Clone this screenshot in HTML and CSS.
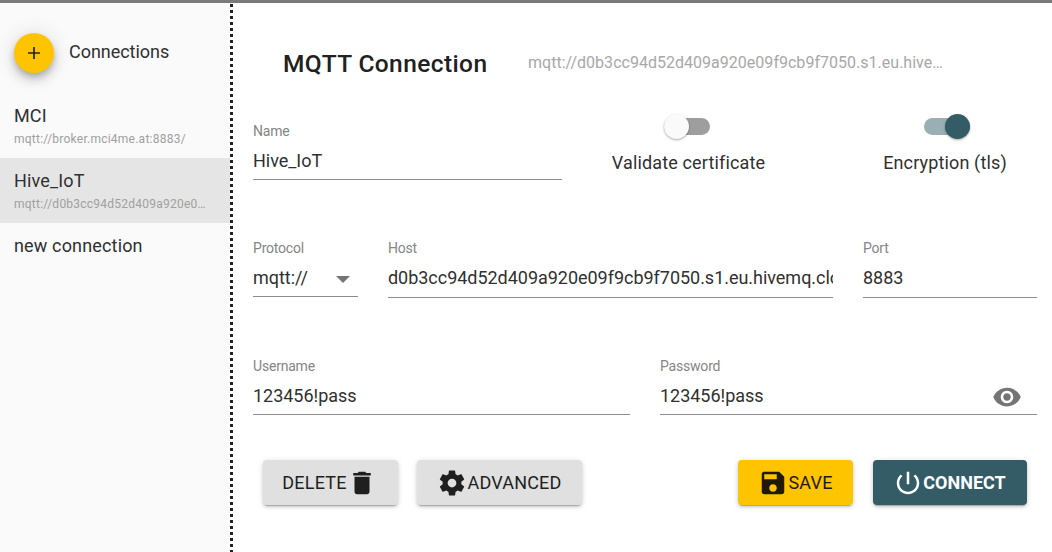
FILE: index.html
```
<!DOCTYPE html>
<html lang="en">
<head>
<meta charset="utf-8">
<title>MQTT Connection</title>
<link rel="stylesheet" href="styles.css">
</head>
<body>
<div class="dialog">
  <aside class="sidebar">
    <div class="sidebar-head">
      <button class="fab" aria-label="Add connection"><svg width="18" height="18" viewBox="0 0 18 18"><path d="M3 9h12M9 3v12" stroke="#2b2300" stroke-width="1.7" fill="none"/></svg></button>
      <span class="sidebar-title">Connections</span>
    </div>
    <div class="item"><div class="item-name">MCI</div><div class="item-url">mqtt://broker.mci4me.at:8883/</div></div>
    <div class="item selected"><div class="item-name">Hive_IoT</div><div class="item-url">mqtt://d0b3cc94d52d409a920e0…</div></div>
    <div class="item"><div class="item-name">new connection</div></div>
  </aside>
  <div class="divider"></div>
  <main class="content">
    <header class="heading">
      <h1 class="title">MQTT Connection</h1>
      <span class="url">mqtt://d0b3cc94d52d409a920e09f9cb9f7050.s1.eu.hive…</span>
    </header>
    <div class="row row-name">
      <label class="field name"><span class="label">Name</span><span class="value">Hive_IoT</span></label>
      <div class="toggle validate"><span class="switch"><span class="track"></span><span class="thumb"></span></span><span class="toggle-label">Validate certificate</span></div>
      <div class="toggle encryption"><span class="switch on"><span class="track"></span><span class="thumb"></span></span><span class="toggle-label">Encryption (tls)</span></div>
    </div>
    <div class="row row-host">
      <label class="field protocol"><span class="label">Protocol</span><span class="value">mqtt://<svg class="arrow" width="14" height="7" viewBox="0 0 14 7"><path d="M0 0h14L7 7z" fill="#757575"/></svg></span></label>
      <label class="field host"><span class="label">Host</span><span class="value">d0b3cc94d52d409a920e09f9cb9f7050.s1.eu.hivemq.clo</span></label>
      <label class="field port"><span class="label">Port</span><span class="value">8883</span></label>
    </div>
    <div class="row row-auth">
      <label class="field"><span class="label">Username</span><span class="value">123456!pass</span></label>
      <label class="field"><span class="label">Password</span><span class="value">123456!pass<svg class="eye" width="30" height="30" viewBox="0 0 24 24"><path fill="#757575" d="M12 4.500C7 4.500 2.730 7.610 1 12c1.730 4.390 6 7.500 11 7.500s9.270-3.110 11-7.500c-1.730-4.390-6-7.500-11-7.500zM12 17c-2.760 0-5-2.240-5-5s2.240-5 5-5 5 2.240 5 5-2.240 5-5 5zm0-8c-1.660 0-3 1.340-3 3s1.340 3 3 3 3-1.340 3-3-1.340-3-3-3z"/></svg></span></label>
    </div>
    <div class="actions">
      <button class="btn delete">DELETE<svg width="30" height="30" viewBox="0 0 24 24"><path fill="currentColor" d="M6 19c0 1.100.9 2 2 2h8c1.100 0 2-.9 2-2V7H6v12zM19 4h-3.500l-1-1h-5l-1 1H5v2h14V4z"/></svg></button>
      <button class="btn advanced"><svg width="30" height="30" viewBox="0 0 24 24"><path fill="currentColor" d="M19.430 12.980c.04-.32.070-.64.070-.98s-.03-.66-.07-.98l2.110-1.650c.19-.15.240-.42.120-.64l-2-3.460c-.12-.22-.39-.3-.61-.22l-2.490 1c-.52-.4-1.080-.73-1.690-.98l-.38-2.650C14.460 2.180 14.250 2 14 2h-4c-.25 0-.46.180-.49.420l-.38 2.650c-.61.250-1.170.59-1.690.98l-2.490-1c-.23-.09-.49 0-.61.220l-2 3.460c-.13.220-.07.490.12.640l2.110 1.650c-.04.320-.07.650-.07.980s.03.660.07.980l-2.110 1.650c-.19.150-.24.420-.12.640l2 3.460c.12.220.39.300.61.220l2.490-1c.52.400 1.080.730 1.690.980l.38 2.650c.03.240.24.420.49.420h4c.25 0 .46-.18.490-.42l.38-2.650c.61-.25 1.170-.59 1.690-.98l2.490 1c.23.090.49 0 .61-.22l2-3.460c.12-.22.070-.49-.12-.64l-2.110-1.650zM12 15.500c-1.930 0-3.500-1.570-3.500-3.500s1.570-3.500 3.500-3.500 3.500 1.570 3.500 3.500-1.570 3.500-3.500 3.500z"/></svg>ADVANCED</button>
      <button class="btn save"><svg width="30" height="30" viewBox="0 0 24 24"><path fill="currentColor" d="M17 3H5c-1.110 0-2 .9-2 2v14c0 1.100.89 2 2 2h14c1.100 0 2-.9 2-2V7l-4-4zm-5 16c-1.660 0-3-1.340-3-3s1.340-3 3-3 3 1.340 3 3-1.340 3-3 3zm3-10H5V5h10v4z"/></svg>SAVE</button>
      <button class="btn connect"><svg width="30" height="30" viewBox="0 0 24 24"><path fill="currentColor" d="M13 3h-2v10h2V3zm4.830 2.170l-1.420 1.420C17.990 7.860 19 9.810 19 12c0 3.870-3.130 7-7 7s-7-3.130-7-7c0-2.190 1.010-4.140 2.580-5.420L6.170 5.170C4.230 6.820 3 9.260 3 12c0 4.970 4.030 9 9 9s9-4.030 9-9c0-2.740-1.230-5.180-3.170-6.830z"/></svg>CONNECT</button>
    </div>
  </main>
</div>
</body>
</html>
```
FILE: styles.css
```
* { box-sizing: border-box; }
body { margin: 0; background: #fff; color: #303030; font-family: Roboto, "Liberation Sans", sans-serif; font-size: 18px; letter-spacing: 0.16px; }
.dialog { display: flex; height: 552px; border-top: 3px solid #7b7b7b; overflow: hidden; }
.sidebar { width: 230px; background: #fafafa; flex: none; }
.sidebar-head { display: flex; align-items: center; gap: 15px; height: 90px; padding: 10px 0 0 14px; }
.fab { width: 40px; height: 40px; border: 0; border-radius: 50%; background: #ffc400; padding: 0; display: flex; align-items: center; justify-content: center; box-shadow: 0 4px 6px -1px rgba(0,0,0,.2), 0 7px 12px rgba(0,0,0,.14), 0 1px 22px rgba(0,0,0,.12); }
.sidebar-title { line-height: 24px; margin-top: -3px; letter-spacing: -0.04px; }
.item { height: 65px; padding: 9px 14px 0; }
.item.selected { background: #e5e5e5; }
.item-name { line-height: 27px; }
.item-url { font-size: 12px; line-height: 20px; color: #a0a0a0; letter-spacing: .24px; white-space: nowrap; }
.divider { width: 3px; flex: none; background: linear-gradient(#212121 0 3px, #fff 3px 6px) 0 1px / 3px 6px; }
.content { flex: 1; padding: 0 15px 0 20px; min-width: 0; }
.heading { height: 120px; display: flex; align-items: center; padding-left: 30px; gap: 40px; }
.title { font-size: 24.5px; font-weight: 500; line-height: 32px; margin: 1px 0 0; width: 205px; white-space: nowrap; flex: none; letter-spacing: .4px; color: #212121; }
.url { font-size: 16px; color: #a8a8a8; letter-spacing: 0.02px; white-space: nowrap; margin-top: -1px; }
.row { display: flex; gap: 30px; height: 118px; }
.row-name { height: 117px; gap: 0; }
.field { flex: 1; min-width: 0; }
.label { display: block; font-size: 14px; line-height: 16px; color: #858585; letter-spacing: -0.2px; }
.value { display: flex; align-items: center; height: 41px; padding-top: 3px; border-bottom: 1px solid #8d8d8d; overflow: hidden; white-space: nowrap; letter-spacing: -0.03px; }
.name { flex: 0 0 309px; }
.row-host .value { height: 42px; padding-top: 2px; }
.row-host .protocol .value { height: 41px; padding-top: 3px; }
.protocol { flex: 0 0 105px; }
.host { flex: 0 0 445px; }
.arrow { margin-left: auto; margin-right: 8px; margin-top: 3px; }
.eye { margin-left: auto; margin-right: 15px; margin-top: 2px; }
.toggle { display: flex; flex-direction: column; align-items: center; margin-top: -10px; flex: none; }
.validate { width: 193px; margin-left: 30px; }
.validate .switch { margin-right: 3px; }
.encryption { width: 184px; margin-left: 68px; }
.encryption .switch { margin-left: 4px; }
.switch { display: flex; align-items: center; width: 46px; height: 26px; }
.track { flex: none; width: 46px; height: 17px; border-radius: 9px; background: #9e9e9e; }
.thumb { flex: none; width: 25px; height: 25px; border-radius: 50%; background: #fafafa; margin-left: -46px; box-shadow: 0 1px 2px rgba(0,0,0,.25), 0 1px 3px rgba(0,0,0,.1); }
.on .track { background: #9aafb3; }
.on .thumb { background: #335c67; margin-left: -25px; }
.toggle-label { line-height: 24px; margin-top: 12px; white-space: nowrap; letter-spacing: .14px; }
.actions { display: flex; padding: 0 10px; margin-top: -16px; }
.btn { height: 45px; border: 0; border-radius: 4px; padding: 0; display: flex; align-items: center; justify-content: center; font: 400 18px Roboto, "Liberation Sans", sans-serif; letter-spacing: .2px; color: #1f1f1f; background: #e0e0e0; box-shadow: 0 3px 1px -2px rgba(0,0,0,.2), 0 2px 3px rgba(0,0,0,.14), 0 1px 6px rgba(0,0,0,.12); }
.delete { width: 135px; padding-right: 2px; }
.advanced { width: 165px; margin-left: 19px; }
.save { width: 115px; margin-left: auto; background: #ffc400; color: #211a00; }
.connect { width: 154px; margin-left: 20px; background: #335c67; color: #fff; font-weight: 700; letter-spacing: 0; padding-right: 1px; }
```
